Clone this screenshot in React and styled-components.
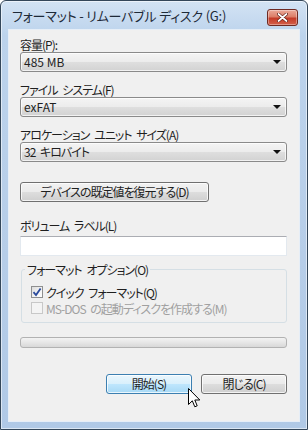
import styled, { createGlobalStyle } from 'styled-components';

const GlobalStyle = createGlobalStyle`
  body {
    margin: 0;
    background: #fff;
    font-family: "Noto Sans CJK JP", "Noto Sans", sans-serif;
    font-feature-settings: "palt";
  }
`

const Window = styled.div`
  position: relative;
  box-sizing: border-box;
  width: 308px;
  height: 430px;
  display: flex;
  flex-direction: column;
  border: 1px solid #34475a;
  border-radius: 6px 6px 0 0;
  padding: 0 7px 7px 7px;
  background: linear-gradient(180deg, #d3e3f4 0%, #bcd3ec 8%, #b6cde8 60%, #b0c9e6 100%);
  box-shadow: inset 0 0 0 1px rgba(255, 255, 255, 0.55);
`

const TitleBar = styled.div`
  height: 28px;
  display: flex;
  align-items: center;
  justify-content: space-between;
  padding-left: 4px;
`

const Title = styled.div`
  font-size: 13px;
  color: #1e2a38;
  letter-spacing: -0.2px;
  margin-top: 1px;
`

const CloseButton = styled.div`
  width: 29px;
  height: 15px;
  margin-right: 2px;
  margin-top: 5px;
  border: 1px solid #6e2a22;
  border-radius: 3px;
  background: linear-gradient(180deg, #eba999 0%, #dc7e68 45%, #c43b28 55%, #d4604a 100%);
  box-shadow: inset 0 0 0 1px rgba(255, 255, 255, 0.35);
  display: flex;
  align-items: center;
  justify-content: center;
`

const Content = styled.div`
  flex: 1;
  display: flex;
  flex-direction: column;
  background: #f0f0f0;
  border: 1px solid #e6eef7;
  padding: 7px 12px 0 11px;
  font-size: 12px;
  color: #1f1f1f;
  word-spacing: 3px;
`

const Label = styled.div`
  line-height: 15px;
  height: 15px;
  margin-top: ${p => p.$top || 0}px;
  letter-spacing: -1px;
  white-space: nowrap;
`

const Combo = styled.div`
  box-sizing: border-box;
  height: 20px;
  border: 1px solid #8a8a8a;
  border-radius: 3px;
  background: linear-gradient(180deg, #f4f4f4 0%, #ececec 48%, #dedede 52%, #d2d2d2 100%);
  box-shadow: inset 0 0 0 1px rgba(255, 255, 255, 0.7);
  display: flex;
  align-items: center;
  justify-content: space-between;
  padding: 0 4px 0 3px;
  line-height: 18px;
  letter-spacing: ${p => (p.$jp ? '-1px' : '0')};
  word-spacing: ${p => (p.$jp ? '3px' : '0')};
`

const Arrow = styled.div`
  width: 0;
  height: 0;
  margin-right: 1px;
  border-left: 4px solid transparent;
  border-right: 4px solid transparent;
  border-top: 4px solid #111;
`

const PushButton = styled.button`
  box-sizing: border-box;
  width: ${p => p.$width}px;
  height: 20px;
  margin-top: ${p => p.$top || 0}px;
  padding: 0;
  font: inherit;
  font-size: 12px;
  letter-spacing: -1px;
  color: #1f1f1f;
  border: 1px solid ${p => (p.$hot ? '#3c7fb1' : '#707070')};
  border-radius: 3px;
  background: ${p =>
    p.$hot
      ? 'linear-gradient(180deg, #eaf6fd 0%, #d9f0fc 48%, #bee6fd 52%, #a7d9f5 100%)'
      : 'linear-gradient(180deg, #f2f2f2 0%, #ebebeb 48%, #dddddd 52%, #cfcfcf 100%)'};
  box-shadow: inset 0 0 0 1px rgba(255, 255, 255, 0.75);
  line-height: 18px;
`

const TextBox = styled.div`
  box-sizing: border-box;
  height: 20px;
  margin-top: 3px;
  background: #fff;
  border: 1px solid #e3e9ef;
  border-top-color: #abadb3;
`

const Group = styled.fieldset`
  margin: 6px 0 0 1px;
  padding: 7px 8px 6px 9px;
  border: 1px solid #d5dfe5;
  border-radius: 3px;
`

const Legend = styled.legend`
  padding: 0 2px;
  margin-left: -6px;
  line-height: 15px;
  letter-spacing: -1px;
`

const CheckRow = styled.div`
  display: flex;
  align-items: center;
  height: 16px;
  gap: 3px;
  letter-spacing: -1px;
  color: ${p => (p.$disabled ? '#a0a0a0' : '#1f1f1f')};
  white-space: nowrap;
`

const Box = styled.div`
  box-sizing: border-box;
  width: 12px;
  height: 12px;
  border: 1px solid ${p => (p.$disabled ? '#c8c8c8' : '#8e8f8f')};
  background: ${p =>
    p.$disabled ? '#f4f4f4' : 'linear-gradient(135deg, #dcdcdc 0%, #f4f4f4 60%, #ffffff 100%)'};
  display: flex;
  align-items: center;
  justify-content: center;
`

const Progress = styled.div`
  box-sizing: border-box;
  height: 11px;
  margin-top: 14px;
  border: 1px solid #b2b2b2;
  border-radius: 3px;
  background: linear-gradient(180deg, #f3f3f3 0%, #e6e6e6 50%, #d8d8d8 100%);
`

const ButtonRow = styled.div`
  display: flex;
  justify-content: flex-end;
  gap: 9px;
  margin-top: 26px;
`

const Cursor = styled.svg`
  position: absolute;
  left: 187px;
  top: 387px;
`

function Check() {
  return (
    <svg width="10" height="10" viewBox="0 0 10 10">
      <path d="M1.5 5.2 L4 8 L8.6 1.4" fill="none" stroke="#2a4a9c" strokeWidth="1.8" />
    </svg>
  )
}

export default function App() {
  return (
    <>
      <GlobalStyle />
      <Window>
        <TitleBar>
          <Title>フォーマット - リムーバブル ディスク (G:)</Title>
          <CloseButton>
            <svg width="11" height="9" viewBox="0 0 11 9">
              <path d="M1.5 1 L9.5 8 M9.5 1 L1.5 8" stroke="#5a1a12" strokeWidth="3" strokeLinecap="round" />
              <path d="M1.5 1 L9.5 8 M9.5 1 L1.5 8" stroke="#fff" strokeWidth="1.7" strokeLinecap="round" />
            </svg>
          </CloseButton>
        </TitleBar>
        <Content>
          <Label>容量(P):</Label>
          <Combo>
            <span>485 MB</span>
            <Arrow />
          </Combo>
          <Label $top={10}>ファイル システム(F)</Label>
          <Combo>
            <span>exFAT</span>
            <Arrow />
          </Combo>
          <Label $top={10}>アロケーション ユニット サイズ(A)</Label>
          <Combo $jp>
            <span>32 キロバイト</span>
            <Arrow />
          </Combo>
          <PushButton $width={189} $top={20}>デバイスの既定値を復元する(D)</PushButton>
          <Label $top={16}>ボリューム ラベル(L)</Label>
          <TextBox />
          <Group>
            <Legend>フォーマット オプション(O)</Legend>
            <CheckRow>
              <Box><Check /></Box>
              <span>クイック フォーマット(Q)</span>
            </CheckRow>
            <CheckRow $disabled>
              <Box $disabled />
              <span>MS-DOS の起動ディスクを作成する(M)</span>
            </CheckRow>
          </Group>
          <Progress />
          <ButtonRow>
            <PushButton $width={86} $hot>開始(S)</PushButton>
            <PushButton $width={86}>閉じる(C)</PushButton>
          </ButtonRow>
        </Content>
        <Cursor width="13" height="21" viewBox="0 0 13 21">
          <path
            d="M0.5 0.5 L0.5 16.5 L4.3 12.8 L6.8 18.8 L9.2 17.8 L6.8 12 L11.8 12 Z"
            fill="#fff"
            stroke="#000"
            strokeWidth="1"
            strokeLinejoin="round"
          />
        </Cursor>
      </Window>
    </>
  )
}
